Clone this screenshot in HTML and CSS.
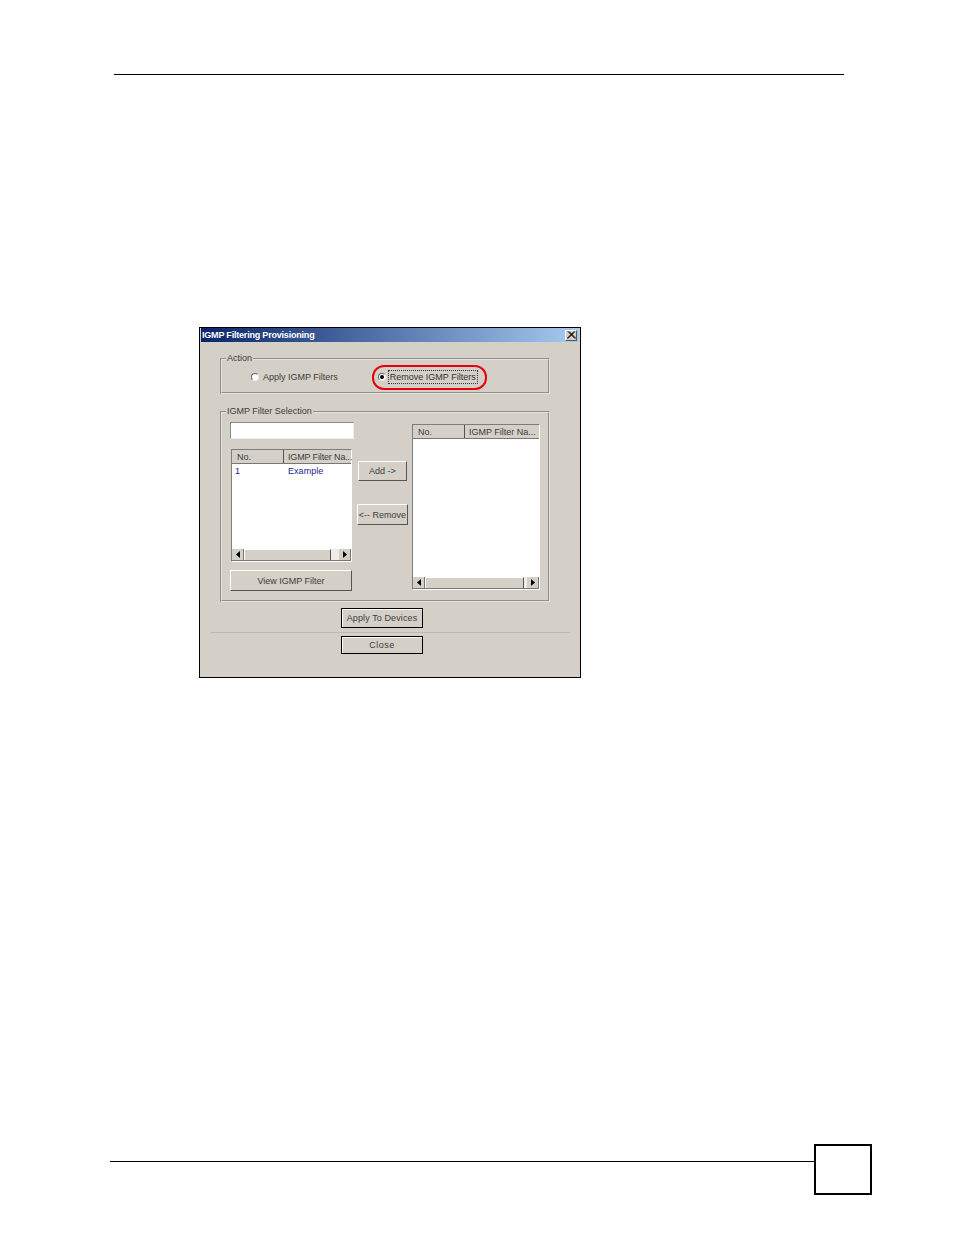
FILE: index.html
```html
<!DOCTYPE html>
<html lang="en">
<head>
  <meta charset="UTF-8">
  <title>IGMP Filtering Provisioning</title>
  <link rel="stylesheet" href="styles.css">
</head>
<body>
  <div class="page">
    <div class="top-rule"></div>

    <div class="dialog">
      <div class="titlebar">
        <span>IGMP Filtering Provisioning</span>
        <div class="close-x">
          <svg width="9" height="8" viewBox="0 0 9 8"><path d="M1 0.5L8 7.5M8 0.5L1 7.5M2 0.5L9 7.5M7 0.5L0 7.5" stroke="#000" stroke-width="1" fill="none"/></svg>
        </div>
      </div>

      <fieldset class="group action-group">
        <legend>Action</legend>
        <div class="radio-row">
          <label class="radio apply"><i class="dot"></i>Apply IGMP Filters</label>
          <label class="radio remove"><i class="dot on"></i><span class="focus">Remove IGMP Filters</span></label>
        </div>
      </fieldset>

      <fieldset class="group select-group">
        <legend>IGMP Filter Selection</legend>
        <div class="columns">
          <div class="left-col">
            <div class="text-input"></div>
            <div class="table left-table">
              <div class="thead"><div class="th no">No.</div><div class="th name">IGMP Filter Na...</div></div>
              <div class="tbody">
                <div class="row"><span class="no">1</span><span class="name">Example</span></div>
              </div>
              <div class="hscroll">
                <div class="arrow"><svg width="4" height="7" viewBox="0 0 4 7"><path d="M4 0V7L0 3.5Z" fill="#000"/></svg></div>
                <div class="thumb"></div>
                <div class="track"></div>
                <div class="arrow"><svg width="4" height="7" viewBox="0 0 4 7"><path d="M0 0V7L4 3.5Z" fill="#000"/></svg></div>
              </div>
            </div>
            <div class="btn view-btn">View IGMP Filter</div>
          </div>
          <div class="mid-col">
            <div class="btn add-btn">Add -&gt;</div>
            <div class="btn remove-btn">&lt;-- Remove</div>
          </div>
          <div class="table right-table">
            <div class="thead"><div class="th no">No.</div><div class="th name">IGMP Filter Na...</div></div>
            <div class="tbody"></div>
            <div class="hscroll">
              <div class="arrow"><svg width="4" height="7" viewBox="0 0 4 7"><path d="M4 0V7L0 3.5Z" fill="#000"/></svg></div>
              <div class="thumb"></div>
              <div class="track short"></div>
              <div class="arrow"><svg width="4" height="7" viewBox="0 0 4 7"><path d="M0 0V7L4 3.5Z" fill="#000"/></svg></div>
            </div>
          </div>
        </div>
      </fieldset>

      <div class="btn dark apply-btn">Apply To Devices</div>
      <div class="separator"></div>
      <div class="btn dark close-btn">Close</div>
    </div>

    <div class="footer">
      <div class="foot-rule"></div>
      <div class="page-box"></div>
    </div>
  </div>
</body>
</html>
```
FILE: styles.css
```css
* {
  box-sizing: border-box;
}
body {
  margin: 0;
  background: #fff;
  font-family: "Liberation Sans", Arial, sans-serif;
}
.page {
  width: 954px;
  height: 1235px;
  padding-top: 74px;
}
.top-rule {
  width: 730px;
  height: 1px;
  margin-left: 114px;
  background: #000;
}
.dialog {
  width: 382px;
  height: 351px;
  margin: 252px 0 0 199px;
  padding: 0 1px;
  border: 1px solid #000;
  background: #d4d0c8;
  font-size: 9px;
  color: #3c3c3c;
}
.titlebar {
  display: flex;
  justify-content: space-between;
  align-items: center;
  height: 14px;
  padding: 0 2px 0 1px;
  background: linear-gradient(90deg, #0a246a, #a6caf0);
  color: #fff;
  font-weight: bold;
  letter-spacing: -0.2px;
}
.close-x {
  display: flex;
  justify-content: center;
  align-items: center;
  width: 12px;
  height: 11px;
  background: #d4d0c8;
  border: 1px solid;
  border-color: #fff #555 #555 #fff;
}
.group {
  margin: 0 0 0 19px;
  padding: 0;
  width: 330px;
  border: 2px groove #e4e2dc;
}
.group legend {
  margin-left: 4px;
  padding: 0 1px;
  line-height: 11px;
}
.action-group {
  height: 41px;
  margin-top: 11px;
}
.radio-row {
  display: flex;
  align-items: center;
  padding: 6px 0 0 29px;
}
.radio {
  display: flex;
  align-items: center;
  gap: 4px;
}
.dot {
  display: block;
  position: relative;
  width: 8px;
  height: 8px;
  border-radius: 50%;
  background: #fff;
  border: 1px solid;
  border-color: #666 #eee #eee #666;
}
.dot.on::after {
  content: "";
  position: absolute;
  left: 1px;
  top: 1px;
  width: 4px;
  height: 4px;
  border-radius: 50%;
  background: #000;
}
.remove {
  position: relative;
  margin-left: 40px;
  gap: 2px;
}
.remove::after {
  content: "";
  position: absolute;
  left: -6px;
  top: -5px;
  width: 111px;
  height: 21px;
  border: 2px solid #e8000d;
  border-radius: 12px;
}
.focus {
  padding: 0 1px;
  line-height: 12px;
  border: 1px dotted #333;
  color: #333;
}
.select-group {
  height: 196px;
  margin-top: 12px;
}
.columns {
  display: flex;
  align-items: flex-start;
  padding: 0 0 0 8px;
}
.left-col {
  width: 124px;
  padding-top: 5px;
}
.text-input {
  width: 124px;
  height: 17px;
  background: #fff;
  border: 1px solid;
  border-color: #8a8a8a #eee #eee #8a8a8a;
}
.table {
  display: flex;
  flex-direction: column;
  border: 1px solid;
  border-color: #7d7d7d #fff #fff #7d7d7d;
  background: #fff;
}
.left-table {
  width: 121px;
  height: 113px;
  margin: 10px 0 0 1px;
}
.left-table .thead .name {
  letter-spacing: -0.15px;
}
.right-table {
  width: 128px;
  height: 166px;
  margin: 7px 0 0 4px;
}
.thead {
  display: flex;
  height: 14px;
  background: #d4d0c8;
  border-bottom: 1px solid #777;
}
.th {
  padding: 1px 0 0 5px;
  line-height: 12px;
  white-space: nowrap;
}
.thead .no {
  width: 52px;
  border-right: 1px solid #555;
}
.thead .name {
  flex: 1;
  min-width: 0;
  padding-left: 4px;
}
.tbody {
  flex: 1;
}
.row {
  display: flex;
  color: #1c1c8c;
  line-height: 14px;
}
.row .no {
  width: 56px;
  padding-left: 3px;
}
.row .name {
  letter-spacing: 0.05px;
}
.hscroll {
  display: flex;
  height: 12px;
  background: #d4d0c8;
  border-bottom: 1px solid #777;
}
.arrow {
  display: flex;
  justify-content: center;
  align-items: center;
  width: 12px;
  border-right: 1px solid #777;
}
.hscroll .thumb {
  flex: 1;
  border-top: 1px solid #fff;
  border-right: 1px solid #555;
  border-left: 1px solid #fff;
}
.hscroll .track {
  width: 8px;
  background: #eeece8;
}
.hscroll .track.short {
  width: 3px;
}
.btn {
  display: flex;
  justify-content: center;
  align-items: center;
  background: #d4d0c8;
  border: 1px solid;
  border-color: #fff #555 #555 #fff;
  white-space: nowrap;
}
.view-btn {
  width: 122px;
  height: 21px;
  margin-top: 8px;
}
.mid-col {
  display: flex;
  flex-direction: column;
  align-items: center;
  width: 54px;
  padding: 44px 0 0 3px;
}
.add-btn {
  width: 49px;
  height: 20px;
}
.remove-btn {
  width: 51px;
  height: 21px;
  margin-top: 23px;
}
.dark {
  width: 82px;
  border-color: #000;
  box-shadow: inset 1px 1px 0 #fff;
}
.apply-btn {
  height: 20px;
  margin: 6px 0 0 140px;
  letter-spacing: 0.1px;
}
.separator {
  width: 359px;
  height: 1px;
  margin: 4px 0 3px 10px;
  background: #bdbab3;
}
.close-btn {
  height: 18px;
  margin-left: 140px;
  letter-spacing: 0.5px;
}
.footer {
  display: flex;
  align-items: flex-start;
  margin: 466px 0 0 110px;
}
.foot-rule {
  width: 704px;
  height: 1px;
  margin-top: 17px;
  background: #000;
}
.page-box {
  width: 58px;
  height: 51px;
  border: 2px solid #000;
}
```
